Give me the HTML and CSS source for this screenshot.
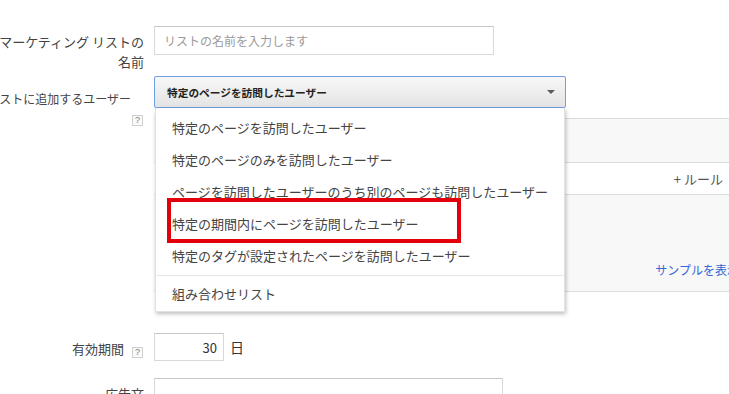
FILE: index.html
```html
<!DOCTYPE html>
<html lang="ja">
<head>
    <meta charset="UTF-8">
    <meta name="viewport" content="width=device-width, initial-scale=1.0">
    <title>リストの作成</title>
    <link rel="stylesheet" href="styles.css">
</head>
<body>

    <div class="page">
        <div class="row row-name">
            <div class="label">マーケティング リストの<br>名前</div>
            <div class="field">
                <input class="text-input name-input" type="text" placeholder="リストの名前を入力します">
            </div>
        </div>

        <div class="row row-users">
            <div class="label label-stack">
                <span class="label-text">リストに追加するユーザー</span>
                <span class="help">?</span>
            </div>
            <div class="field">
                <div class="select-wrap">
                    <div class="select">
                        <span>特定のページを訪問したユーザー</span>
                        <span class="arrow"></span>
                    </div>
                    <ul class="menu">
                        <li>特定のページを訪問したユーザー</li>
                        <li>特定のページのみを訪問したユーザー</li>
                        <li>ページを訪問したユーザーのうち別のページも訪問したユーザー</li>
                        <li>特定の期間内にページを訪問したユーザー</li>
                        <li>特定のタグが設定されたページを訪問したユーザー</li>
                        <li class="sep"></li>
                        <li>組み合わせリスト</li>
                    </ul>
                    <div class="highlight"></div>
                </div>
                <div class="rules">
                    <div class="rules-head"></div>
                    <div class="rules-add">+ ルール</div>
                    <div class="rules-body">
                        <a class="sample" href="#">サンプルを表示</a>
                    </div>
                </div>
            </div>
        </div>

        <div class="row row-days">
            <div class="label">有効期間<span class="help help-inline">?</span></div>
            <div class="field field-inline">
                <input class="text-input days-input" type="text" value="30">
                <span class="unit">日</span>
            </div>
        </div>

        <div class="row row-ad">
            <div class="label">広告文</div>
            <div class="field">
                <input class="text-input ad-input" type="text">
            </div>
        </div>
    </div>

</body>
</html>
```

FILE: styles.css
```css
html, body {
    margin: 0;
    overflow: hidden;
    background: #fff;
}
body {
    font-family: "Noto Sans CJK JP", "Liberation Sans", sans-serif;
    font-size: 13px;
    color: #444;
}
.page {
    padding-top: 26px;
    margin-left: -31px;
}
.row {
    display: flex;
}
.label {
    width: 175px;
    flex: none;
    text-align: right;
    line-height: 20px;
    white-space: nowrap;
    padding-top: 6px;
}
.field {
    margin-left: 10px;
}
.text-input {
    box-sizing: border-box;
    border: 1px solid #d9d9d9;
    border-top-color: #c6c6c6;
    font-family: inherit;
    color: #333;
    outline: none;
    margin: 0;
}
.name-input {
    width: 340px;
    height: 29px;
    padding: 0 9px;
    font-size: 12px;
}
.name-input::placeholder {
    color: #9a9a9a;
}
.help {
    display: inline-block;
    box-sizing: border-box;
    width: 11px;
    height: 11px;
    border: 1px solid #cfcfcf;
    background: #fafafa;
    color: #777;
    font-family: "Liberation Sans", sans-serif;
    font-size: 9px;
    line-height: 9px;
    text-align: center;
}

/* リストに追加するユーザー */
.row-users {
    margin-top: 4px;
}
.label-stack {
    display: flex;
    flex-direction: column;
    align-items: flex-end;
    padding-top: 13px;
}
.label-text {
    padding-right: 13px;
    font-size: 12px;
}
.label-stack .help {
    margin-top: 6px;
    margin-right: 1px;
}
.select-wrap {
    position: relative;
}
.select {
    box-sizing: border-box;
    width: 412px;
    height: 32px;
    display: flex;
    align-items: center;
    padding: 0 10px 0 12px;
    border: 1px solid #6f9fe4;
    border-radius: 2px;
    background: linear-gradient(#f7f7f7, #e4e4e4);
    font-size: 10.7px;
    font-weight: bold;
    color: #222;
}
.arrow {
    margin-left: auto;
    border-left: 4px solid transparent;
    border-right: 4px solid transparent;
    border-top: 4px solid #5a5a5a;
}
.menu {
    position: absolute;
    top: 100%;
    left: 1px;
    z-index: 2;
    box-sizing: border-box;
    width: 410px;
    margin: 0;
    padding: 4px 0 1px;
    list-style: none;
    background: #fff;
    border: 1px solid #e2e2e2;
    border-top: none;
    box-shadow: 1px 2px 4px rgba(0, 0, 0, 0.25);
}
.menu li {
    height: 32px;
    line-height: 32px;
    padding-left: 16px;
    font-size: 13px;
    color: #444;
    white-space: nowrap;
}
.menu li.sep {
    height: 1px;
    padding: 0;
    margin: 3px 0 2px;
    background: #e6e6e6;
}
.highlight {
    position: absolute;
    z-index: 3;
    top: 122px;
    left: 13px;
    box-sizing: border-box;
    width: 294px;
    height: 45px;
    border: 4px solid #e3000b;
}
.rules {
    margin-top: 10px;
    width: 600px;
    border-top: 1px solid #dcdcdc;
}
.rules-head {
    height: 43px;
    background: #f8f8f8;
    border-bottom: 1px solid #dcdcdc;
}
.rules-add {
    height: 31px;
    line-height: 31px;
    text-align: right;
    padding-right: 31px;
    color: #555;
    border-bottom: 1px solid #dcdcdc;
}
.rules-body {
    box-sizing: border-box;
    height: 97px;
    display: flex;
    justify-content: flex-end;
    align-items: flex-end;
    padding: 0 15px 13px 0;
    background: #f8f8f8;
    border-bottom: 1px solid #dcdcdc;
}
.sample {
    font-size: 12px;
    line-height: 16px;
    color: #3367d6;
    text-decoration: none;
}

/* 有効期間 */
.row-days {
    margin-top: 41px;
}
.help-inline {
    margin-left: 8px;
    margin-right: 1px;
    vertical-align: -1px;
}
.field-inline {
    display: flex;
    align-items: center;
}
.days-input {
    width: 70px;
    height: 28px;
    padding: 0 6px;
    text-align: right;
    font-size: 13px;
}
.unit {
    margin-left: 6px;
    font-size: 14px;
    color: #333;
}

/* 広告文 */
.row-ad {
    margin-top: 17px;
}
.ad-input {
    width: 349px;
    height: 30px;
}
```
